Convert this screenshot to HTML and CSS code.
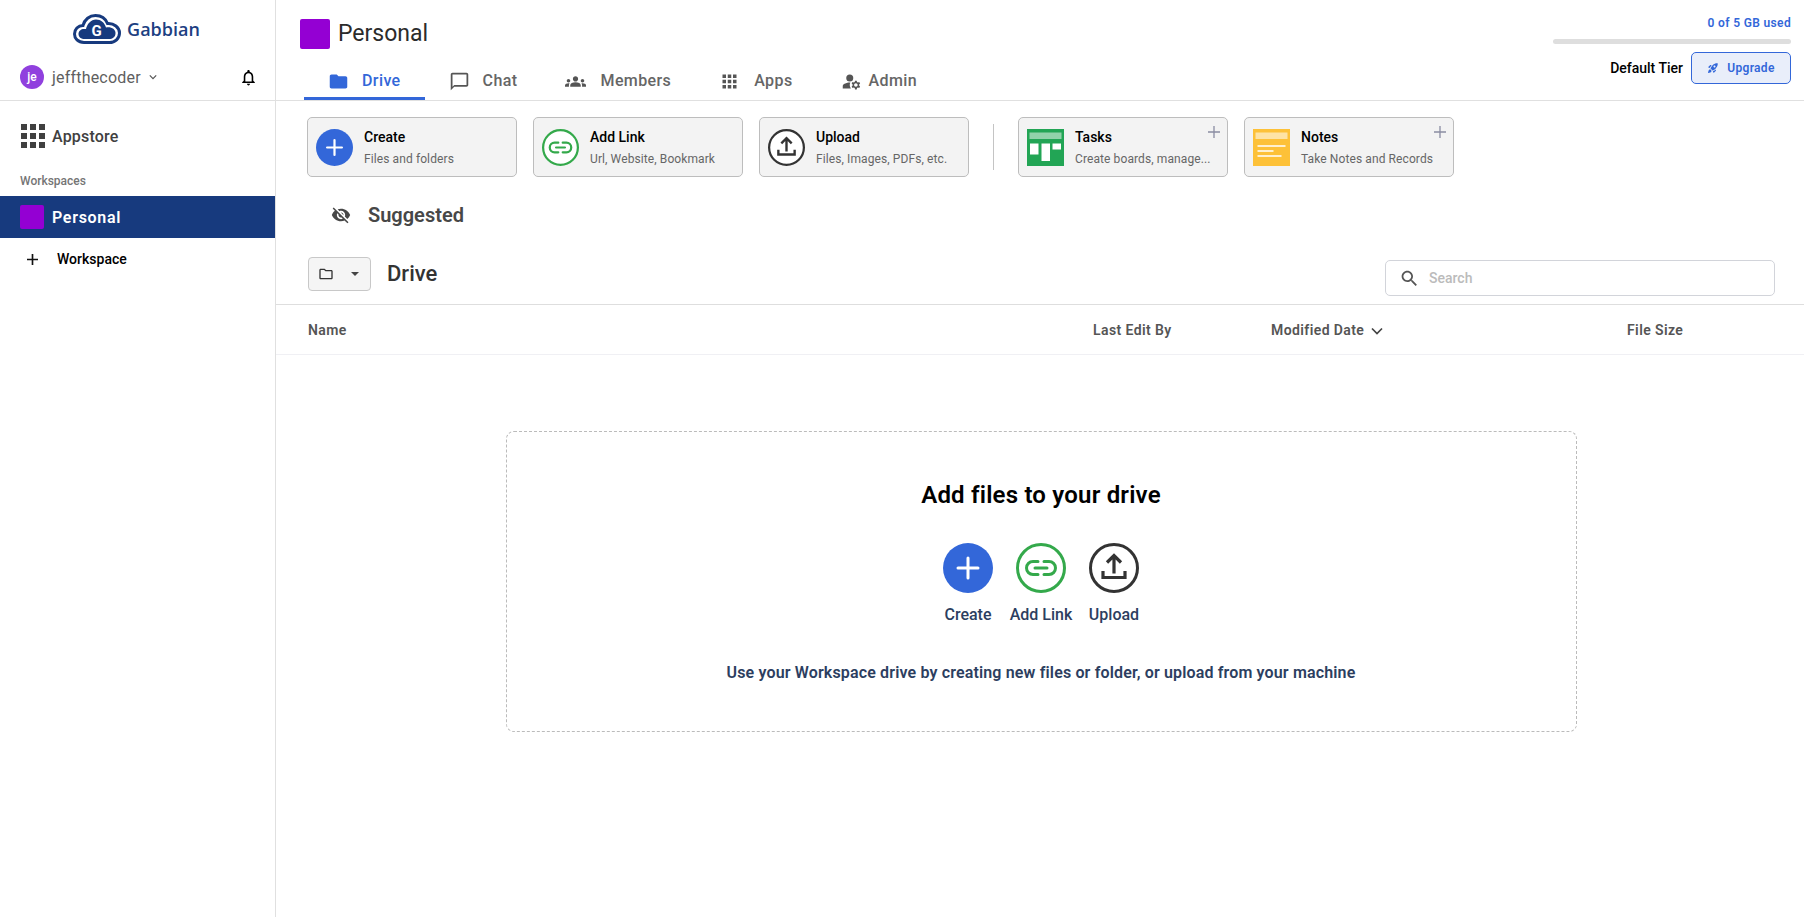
FILE: index.html

```html
<!DOCTYPE html>
<html lang="en">
<head>
  <meta charset="UTF-8" />
  <title>Gabbian Drive</title>
  <link rel="stylesheet" href="styles.css">
</head>
<body>
  <svg class="defs" width="0" height="0">
    <symbol id="ico-create" viewBox="0 0 50 50">
      <circle cx="25" cy="25" r="25" fill="#3367d9"/>
      <path d="M25 15v20M15 25h20" stroke="#fff" stroke-width="3" stroke-linecap="round"/>
    </symbol>
    <symbol id="ico-link" viewBox="0 0 50 50">
      <circle cx="25" cy="25" r="23.5" fill="#fff" stroke="#34a94b" stroke-width="3"/>
      <path d="M22 18.500h-5a6.500 6.500 0 0 0 0 13h5M28 18.500h5a6.500 6.500 0 0 1 0 13h-5M19 25h12" fill="none" stroke="#34a94b" stroke-width="3" stroke-linecap="round"/>
    </symbol>
    <symbol id="ico-upload" viewBox="0 0 50 50">
      <circle cx="25" cy="25" r="23.5" fill="#fff" stroke="#333" stroke-width="3"/>
      <path d="M25 30.500V13M18 19.500l7-7 7 7M14 28v6.500h22V28" fill="none" stroke="#333" stroke-width="3.200"/>
    </symbol>
  </svg>

  <div class="app">
    <!-- Sidebar -->
    <aside class="sidebar">
      <div class="logo">
        <svg class="logo-cloud" viewBox="0 0 48 30">
          <path d="M11 28.500C5 28.500 1.500 24.500 1.500 20S5 11.500 10 11.500C11.500 5.500 16.500 1.500 22.500 1.500c5.500 0 10 3 12 8 6.500-.5 12 4 12 9.500s-4.500 9.500-10 9.500z" fill="#fff" stroke="#173a7e" stroke-width="3"/>
          <path d="M12 25C8 25 5.500 23 5.500 20S8 15 11 15h2c1-5 5-9.500 10-9.500 5 0 8.500 3 10 8 5-1 9.500 1.500 9.500 5.500s-3 6-6.500 6z" fill="#173a7e"/>
          <text x="23.500" y="21.500" text-anchor="middle" class="logo-g">G</text>
        </svg>
        <span class="logo-text">Gabbian</span>
      </div>
      <div class="user-row">
        <span class="avatar">je</span>
        <span class="username">jeffthecoder</span>
        <svg class="user-caret" viewBox="0 0 10 6"><path d="M1 1l4 4 4-4" fill="none" stroke="#555" stroke-width="1.500"/></svg>
        <svg class="bell" viewBox="0 0 24 24"><path d="M12 22c1.100 0 2-.9 2-2h-4c0 1.100.9 2 2 2zm6-6v-5c0-3.070-1.630-5.640-4.500-6.320V4c0-.83-.67-1.500-1.500-1.500s-1.500.67-1.500 1.500v.68C7.640 5.360 6 7.920 6 11v5l-2 2v1h16v-1l-2-2zm-2 1H8v-6c0-2.480 1.510-4.500 4-4.500s4 2.020 4 4.500v6z"/></svg>
      </div>
      <div class="appstore">
        <div class="grid-icon">
          <i></i><i></i><i></i><i></i><i></i><i></i><i></i><i></i><i></i>
        </div>
        <span>Appstore</span>
      </div>
      <div class="side-label">Workspaces</div>
      <div class="side-active">
        <span class="swatch-sm"></span>
        <span>Personal</span>
      </div>
      <div class="side-add">
        <svg viewBox="0 0 12 12"><path d="M6 0v12M0 6h12" stroke="#111" stroke-width="1.800"/></svg>
        <span>Workspace</span>
      </div>
    </aside>

    <main class="main">
      <!-- Top header -->
      <header class="topbar">
        <div class="top-left">
          <div class="title-row">
            <span class="swatch-lg"></span>
            <h1>Personal</h1>
          </div>
          <nav class="tabs">
            <a class="tab tab-active">
              <svg viewBox="0 0 24 24"><path d="M10 4H4c-1.100 0-1.990.9-1.990 2L2 18c0 1.100.9 2 2 2h16c1.100 0 2-.9 2-2V8c0-1.100-.9-2-2-2h-8l-2-2z"/></svg>
              Drive
            </a>
            <a class="tab tab-chat">
              <svg viewBox="0 0 24 24"><path d="M20 2H4c-1.100 0-2 .9-2 2v18l4-4h14c1.100 0 2-.9 2-2V4c0-1.100-.9-2-2-2zm0 14H6l-2 2V4h16v12z"/></svg>
              Chat
            </a>
            <a class="tab">
              <svg viewBox="0 0 24 24"><path d="M4 13c1.100 0 2-.9 2-2s-.9-2-2-2-2 .9-2 2 .9 2 2 2zm1.130 1.100C4.760 14.040 4.390 14 4 14c-.99 0-1.930.21-2.780.58C.48 14.900 0 15.620 0 16.430V18h4.500v-1.610c0-.83.23-1.610.63-2.290zM20 13c1.100 0 2-.9 2-2s-.9-2-2-2-2 .9-2 2 .9 2 2 2zm4 3.430c0-.81-.48-1.530-1.220-1.850C21.930 14.210 20.990 14 20 14c-.39 0-.76.04-1.130.1.4.68.63 1.460.63 2.290V18H24v-1.570zm-7.760-2.780c-1.170-.52-2.610-.9-4.240-.9s-3.070.39-4.240.9C6.680 14.130 6 15.210 6 16.390V18h12v-1.610c0-1.180-.68-2.260-1.760-2.740zM12 12c1.660 0 3-1.340 3-3s-1.340-3-3-3-3 1.340-3 3 1.340 3 3 3z"/></svg>
              Members
            </a>
            <a class="tab">
              <svg viewBox="0 0 24 24"><path d="M4 8h4V4H4v4zm6 12h4v-4h-4v4zm-6 0h4v-4H4v4zm0-6h4v-4H4v4zm6 0h4v-4h-4v4zm6-10v4h4V4h-4zm-6 4h4V4h-4v4zm6 6h4v-4h-4v4zm0 6h4v-4h-4v4z"/></svg>
              Apps
            </a>
            <a class="tab tab-admin">
              <svg viewBox="0 0 24 24"><circle cx="10" cy="8" r="4"/><path d="M10.670 13.020C10.450 13.010 10.230 13 10 13c-2.420 0-4.680.67-6.610 1.820C2.510 15.340 2 16.320 2 17.350V20h9.260c-.79-1.130-1.260-2.510-1.260-4 0-1.070.25-2.070.67-2.980zM20.750 16c0-.22-.03-.42-.06-.63l1.140-1.010-1-1.730-1.450.49c-.32-.27-.68-.48-1.080-.63L18 11h-2l-.3 1.490c-.4.15-.76.36-1.080.63l-1.450-.49-1 1.730 1.140 1.010c-.03.21-.06.41-.06.63s.03.42.06.63l-1.140 1.010 1 1.730 1.450-.49c.32.27.68.48 1.080.63L16 21h2l.3-1.490c.4-.15.76-.36 1.080-.63l1.450.49 1-1.730-1.140-1.010c.03-.21.06-.41.06-.63zM17 18c-1.100 0-2-.9-2-2s.9-2 2-2 2 .9 2 2-.9 2-2 2z"/></svg>
              Admin
            </a>
          </nav>
        </div>
        <div class="top-right">
          <div class="usage">0 of 5 GB used</div>
          <div class="usage-bar"></div>
          <div class="tier-row">
            <span class="tier">Default Tier</span>
            <button class="upgrade">
              <svg viewBox="0 0 24 24"><path d="M9.190 6.350c-2.040 2.290-3.440 5.580-3.570 5.890L2 10.690l4.050-4.050c.47-.47 1.150-.68 1.810-.55l1.330.26zM11.170 17s3.740-1.550 5.890-3.700c5.400-5.400 4.500-9.620 4.210-10.570-.95-.3-5.170-1.190-10.570 4.210C8.550 9.090 7 12.830 7 12.830L11.170 17zm6.480-2.190c-2.290 2.040-5.580 3.440-5.890 3.570L13.310 22l4.050-4.050c.47-.47.68-1.150.55-1.810l-.26-1.330zM9 18c0 .83-.34 1.580-.88 2.120C6.940 21.300 2 22 2 22s.7-4.940 1.880-6.120C4.420 15.340 5.170 15 6 15c1.660 0 3 1.340 3 3zm4-9c0-1.100.9-2 2-2s2 .9 2 2-.9 2-2 2-2-.9-2-2z"/></svg>
              Upgrade
            </button>
          </div>
        </div>
      </header>

      <!-- Quick actions -->
      <section class="cards">
        <div class="card">
          <svg class="card-ico"><use href="#ico-create"/></svg>
          <div class="card-text"><b>Create</b><span>Files and folders</span></div>
        </div>
        <div class="card">
          <svg class="card-ico"><use href="#ico-link"/></svg>
          <div class="card-text"><b>Add Link</b><span>Url, Website, Bookmark</span></div>
        </div>
        <div class="card">
          <svg class="card-ico"><use href="#ico-upload"/></svg>
          <div class="card-text"><b>Upload</b><span>Files, Images, PDFs, etc.</span></div>
        </div>
        <div class="divider"></div>
        <div class="card card-app">
          <svg class="app-ico" viewBox="0 0 37 37">
            <rect width="37" height="37" fill="#22a555"/>
            <rect x="2.500" y="3.500" width="32" height="6.500" fill="#91d2aa"/>
            <rect x="3" y="14.500" width="8.500" height="11" fill="#fff"/>
            <rect x="14.500" y="14.500" width="8.500" height="17.500" fill="#fff"/>
            <rect x="25.500" y="14.500" width="8.500" height="6" fill="#fff"/>
          </svg>
          <div class="card-text"><b>Tasks</b><span>Create boards, manage...</span></div>
          <svg class="card-plus" viewBox="0 0 12 12"><path d="M6 0v12M0 6h12" stroke="#8a8da3" stroke-width="1.300"/></svg>
        </div>
        <div class="card card-app">
          <svg class="app-ico" viewBox="0 0 37 37">
            <rect width="37" height="37" fill="#fdc138"/>
            <rect x="2.500" y="3.500" width="32" height="6.500" fill="#fee3a5"/>
            <path d="M4.500 17h28M4.500 22h16M4.500 27h24" stroke="#fff" stroke-width="1.500"/>
          </svg>
          <div class="card-text"><b>Notes</b><span>Take Notes and Records</span></div>
          <svg class="card-plus" viewBox="0 0 12 12"><path d="M6 0v12M0 6h12" stroke="#8a8da3" stroke-width="1.300"/></svg>
        </div>
      </section>

      <div class="suggested">
        <svg viewBox="0 0 24 24"><path d="M12 7c2.760 0 5 2.240 5 5 0 .65-.13 1.260-.36 1.830l2.920 2.920c1.510-1.260 2.700-2.890 3.430-4.750-1.730-4.390-6-7.500-11-7.500-1.400 0-2.740.25-3.980.7l2.160 2.160C10.740 7.130 11.350 7 12 7zM2 4.270l2.280 2.280.46.46C3.080 8.300 1.780 10.020 1 12c1.730 4.390 6 7.500 11 7.500 1.550 0 3.030-.3 4.380-.84l.42.42L19.730 22 21 20.730 3.270 3 2 4.270zM7.530 9.800l1.550 1.550c-.05.21-.08.43-.08.65 0 1.660 1.340 3 3 3 .22 0 .44-.03.65-.08l1.550 1.550c-.67.33-1.410.53-2.200.53-2.760 0-5-2.240-5-5 0-.79.2-1.530.53-2.200zm4.310-.78l3.150 3.150.02-.16c0-1.660-1.340-3-3-3l-.17.01z"/></svg>
        <span>Suggested</span>
      </div>

      <!-- Drive toolbar -->
      <div class="drive-bar">
        <button class="folder-btn">
          <svg viewBox="0 0 24 24"><path d="M9.170 6l2 2H20v10H4V6h5.170M10 4H4c-1.100 0-1.990.9-1.990 2L2 18c0 1.100.9 2 2 2h16c1.100 0 2-.9 2-2V8c0-1.100-.9-2-2-2h-8l-2-2z"/></svg>
          <i class="caret"></i>
        </button>
        <h2>Drive</h2>
        <div class="search">
          <svg viewBox="0 0 24 24"><path d="M15.500 14h-.79l-.28-.27C15.410 12.590 16 11.110 16 9.500 16 5.910 13.090 3 9.500 3S3 5.910 3 9.500 5.910 16 9.500 16c1.610 0 3.090-.59 4.230-1.570l.27.28v.79l5 4.990L20.490 19l-4.990-5zm-6 0C7.010 14 5 11.990 5 9.500S7.010 5 9.500 5 14 7.010 14 9.500 11.990 14 9.500 14z"/></svg>
          <span>Search</span>
        </div>
      </div>

      <div class="table-head">
        <span class="col-name">Name</span>
        <span class="col-edit">Last Edit By</span>
        <span class="col-date">Modified Date
          <svg viewBox="0 0 12 8"><path d="M1 1.500l5 5 5-5" fill="none" stroke="#444" stroke-width="1.700"/></svg>
        </span>
        <span class="col-size">File Size</span>
      </div>

      <!-- Empty state -->
      <div class="empty-wrap">
        <div class="empty">
          <h3>Add files to your drive</h3>
          <div class="empty-actions">
            <div class="empty-action"><svg><use href="#ico-create"/></svg><span>Create</span></div>
            <div class="empty-action"><svg><use href="#ico-link"/></svg><span>Add Link</span></div>
            <div class="empty-action"><svg><use href="#ico-upload"/></svg><span>Upload</span></div>
          </div>
          <p>Use your Workspace drive by creating new files or folder, or upload from your machine</p>
        </div>
      </div>
    </main>
  </div>
</body>
</html>
```

FILE: styles.css

```css
* {
  box-sizing: border-box;
}

html, body {
  height: 100%;
}

body {
  margin: 0;
  font-family: Roboto, "Liberation Sans", sans-serif;
  background-color: white;
  color: #333;
  overflow: hidden;
}

.defs {
  position: absolute;
}

.app {
  display: flex;
  height: 100%;
}

/* Sidebar */
.sidebar {
  width: 276px;
  flex: none;
  border-right: 1px solid #e0e0e0;
}

.logo {
  height: 58px;
  display: flex;
  align-items: center;
  justify-content: center;
  gap: 6px;
  padding-right: 2px;
}

.logo-cloud {
  width: 48px;
  height: 30px;
}

.logo-g {
  font-family: Roboto, sans-serif;
  font-size: 15px;
  font-weight: 700;
  fill: white;
}

.logo-text {
  font-family: "Open Sans", sans-serif;
  font-size: 18px;
  font-weight: 600;
  color: #1d3f82;
}

.user-row {
  height: 43px;
  display: flex;
  align-items: center;
  padding: 0 0 4px 20px;
  border-bottom: 1px solid #e0e0e0;
}

.avatar {
  width: 24px;
  height: 24px;
  border-radius: 50%;
  background: #9040de;
  color: white;
  font-size: 12px;
  font-weight: 500;
  display: flex;
  align-items: center;
  justify-content: center;
}

.username {
  margin-left: 8px;
  font-size: 16px;
  letter-spacing: 0.2px;
  color: #5f5f5f;
}

.user-caret {
  width: 8px;
  height: 6px;
  margin-left: 8px;
}

.bell {
  width: 19px;
  height: 19px;
  margin-left: auto;
  margin-right: 17px;
}

.appstore {
  height: 48px;
  margin-top: 11px;
  padding-left: 21px;
  display: flex;
  align-items: center;
  gap: 7px;
  font-size: 16px;
  font-weight: 500;
  letter-spacing: 0.2px;
  color: #404040;
}

.grid-icon {
  width: 24px;
  height: 24px;
  display: grid;
  grid-template-columns: repeat(3, 6px);
  grid-auto-rows: 6px;
  gap: 3px;
}

.grid-icon i {
  background: #404040;
}

.side-label {
  height: 36px;
  padding: 14px 0 0 20px;
  font-size: 12px;
  font-weight: 500;
  color: #757575;
}

.side-active {
  height: 42px;
  padding-left: 20px;
  display: flex;
  align-items: center;
  gap: 8px;
  background: #173a7e;
  color: white;
  font-size: 16px;
  font-weight: 600;
  letter-spacing: 0.7px;
}

.swatch-sm {
  width: 24px;
  height: 24px;
  border-radius: 2px;
  background: #9400d3;
}

.side-add {
  height: 42px;
  padding-left: 27px;
  display: flex;
  align-items: center;
  gap: 19px;
  font-size: 14px;
  font-weight: 500;
  color: black;
}

.side-add svg {
  width: 11px;
  height: 11px;
}

/* Main column */
.main {
  flex: 1;
  min-width: 0;
}

.topbar {
  height: 101px;
  display: flex;
  justify-content: space-between;
  border-bottom: 1px solid #e0e0e0;
}

.top-left {
  padding-left: 24px;
}

.title-row {
  height: 68px;
  padding-top: 19px;
  display: flex;
  align-items: flex-start;
  gap: 8px;
}

.swatch-lg {
  width: 30px;
  height: 30px;
  border-radius: 2px;
  background: #9400d3;
}

h1 {
  margin: 0;
  font-size: 23px;
  line-height: 30px;
  font-weight: 400;
  color: #2b2b2b;
}

.tabs {
  display: flex;
  height: 32px;
  margin-left: 4px;
}

.tab {
  display: flex;
  align-items: flex-start;
  padding: 3px 24px 0;
  gap: 14px;
  font-size: 16px;
  line-height: 19px;
  font-weight: 500;
  letter-spacing: 0.4px;
  color: #666;
}

.tab svg {
  width: 21px;
  height: 21px;
  fill: #555;
}

.tab-admin {
  gap: 7px;
}

.tab-chat {
  gap: 13px;
}

.tab-active {
  gap: 13px;
  color: #3367d9;
  border-bottom: 3px solid #3367d9;
}

.tab-active svg {
  fill: #3367d9;
}

.top-right {
  width: 238px;
  margin-right: 13px;
  text-align: right;
}

.usage {
  margin-top: 16px;
  font-size: 12px;
  line-height: 14px;
  font-weight: 600;
  letter-spacing: 0.35px;
  color: #3367d9;
}

.usage-bar {
  height: 5px;
  margin-top: 9px;
  border-radius: 3px;
  background: #dedede;
}

.tier-row {
  display: flex;
  justify-content: flex-end;
  align-items: center;
  gap: 8px;
  margin-top: 8px;
}

.tier {
  font-size: 14px;
  font-weight: 500;
  color: black;
}

.upgrade {
  width: 100px;
  height: 32px;
  display: flex;
  align-items: center;
  justify-content: center;
  gap: 8px;
  border: 1px solid #3367d9;
  border-radius: 5px;
  background: #e9eefa;
  color: #3367d9;
  font-family: inherit;
  font-size: 12px;
  font-weight: 600;
  letter-spacing: 0.3px;
}

.upgrade svg {
  width: 12px;
  height: 12px;
  fill: #3367d9;
}

/* Cards */
.cards {
  display: flex;
  align-items: center;
  padding: 16px 0 0 31px;
}

.card {
  position: relative;
  width: 210px;
  height: 60px;
  margin-right: 16px;
  padding-left: 8px;
  display: flex;
  align-items: center;
  gap: 11px;
  border: 1px solid #bdbdbd;
  border-radius: 5px;
  background: #f3f3f3;
}

.card-ico {
  width: 37px;
  height: 37px;
}

.card-text {
  display: flex;
  flex-direction: column;
  gap: 7px;
  font-size: 12px;
  line-height: 14px;
  letter-spacing: 0.1px;
  color: #666;
}

.card-text b {
  font-size: 14px;
  line-height: 16px;
  font-weight: 500;
  letter-spacing: 0;
  color: black;
}

.divider {
  width: 1px;
  height: 46px;
  margin: 0 24px 0 8px;
  background: #c4c4c4;
}

.card-app {
  gap: 11px;
}

.app-ico {
  width: 37px;
  height: 37px;
}

.card-plus {
  position: absolute;
  top: 8px;
  right: 7px;
  width: 12px;
  height: 12px;
}

.suggested {
  height: 61px;
  padding: 14px 0 0 55px;
  display: flex;
  align-items: center;
  gap: 17px;
  font-size: 20px;
  font-weight: 600;
  color: #474747;
}

.suggested svg {
  width: 20px;
  height: 20px;
  fill: #474747;
}

/* Drive bar */
.drive-bar {
  height: 67px;
  padding: 19px 29px 0 32px;
  display: flex;
  align-items: flex-start;
  border-bottom: 1px solid #dedede;
}

.folder-btn {
  width: 63px;
  height: 34px;
  padding: 0 0 0 9px;
  display: flex;
  align-items: center;
  gap: 17px;
  border: 1px solid #c8c8c8;
  border-radius: 4px;
  background: #f5f5f5;
}

.folder-btn svg {
  width: 16px;
  height: 16px;
  fill: #333;
}

.caret {
  width: 0;
  height: 0;
  border-left: 4px solid transparent;
  border-right: 4px solid transparent;
  border-top: 4px solid #444;
}

h2 {
  margin: 0 0 0 16px;
  font-size: 22px;
  line-height: 34px;
  font-weight: 500;
  color: #333;
}

.search {
  width: 390px;
  height: 36px;
  margin-left: auto;
  margin-top: 3px;
  padding-left: 13px;
  display: flex;
  align-items: center;
  gap: 9px;
  border: 1px solid #d2d4da;
  border-radius: 5px;
  font-size: 14px;
  font-weight: 500;
  color: #bbb;
}

.search svg {
  width: 21px;
  height: 21px;
  fill: #555;
}

/* Table head */
.table-head {
  height: 50px;
  position: relative;
  display: grid;
  grid-template-columns: 785px 178px 356px 1fr;
  align-items: center;
  padding-left: 32px;
  border-bottom: 1px solid #f0f0f4;
  font-size: 14px;
  font-weight: 600;
  letter-spacing: 0.4px;
  color: #555;
}

.col-date svg {
  width: 12px;
  height: 8px;
  margin-left: 3px;
}

/* Empty state */
.empty-wrap {
  display: flex;
  justify-content: center;
  padding: 76px 0 0 2px;
}

.empty {
  width: 1071px;
  height: 301px;
  padding-top: 48px;
  border: 1px dashed #bbb;
  border-radius: 8px;
  text-align: center;
}

h3 {
  margin: 0;
  font-size: 24px;
  line-height: 30px;
  font-weight: 600;
  letter-spacing: 0.2px;
  color: black;
}

.empty-actions {
  display: flex;
  justify-content: center;
  margin-top: 33px;
}

.empty-action {
  width: 73px;
  display: flex;
  flex-direction: column;
  align-items: center;
  gap: 12px;
  font-size: 16px;
  line-height: 19px;
  font-weight: 500;
  color: #2c3e60;
}

.empty-action svg {
  width: 50px;
  height: 50px;
}

.empty p {
  margin: 39px 0 0;
  font-size: 16px;
  line-height: 19px;
  font-weight: 600;
  letter-spacing: 0.15px;
  color: #2c3e60;
}
```
